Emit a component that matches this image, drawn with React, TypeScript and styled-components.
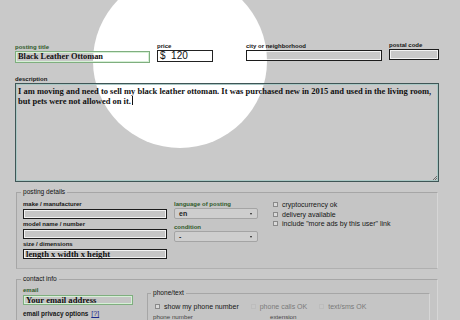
import React from 'react'
import styled, { createGlobalStyle } from 'styled-components'

// constants
const PAGE_BG = '#c9c9c9'
const BOX_BG = '#c5c5c5'
const LABEL_GREEN = '#2f5a2a'
const SANS = "'Liberation Sans', Arial, sans-serif"
const SERIF = "'Liberation Serif', 'Times New Roman', serif"

const GlobalStyle = createGlobalStyle`
  html, body {
    margin: 0;
    padding: 0;
    background: ${PAGE_BG};
  }
  body {
    font-family: ${SANS};
    color: #111;
  }
`

// styled
const Page = styled.div`
  position: relative;
  width: 460px;
  height: 320px;
  overflow: hidden;
  background: ${PAGE_BG};
`

const Spotlight = styled.div`
  position: absolute;
  left: 93px;
  top: -26px;
  width: 174px;
  height: 174px;
  border-radius: 50%;
  background: #fff;
`

const Form = styled.form`
  position: relative;
  padding: 43px 0 0 15px;
  width: 424px;
`

const TopRow = styled.div`
  display: flex;
  align-items: flex-start;
`

const Field = styled.div<{ $width: number; $gap?: number; $nudge?: number }>`
  display: flex;
  flex-direction: column;
  width: ${({ $width }) => $width}px;
  margin-left: ${({ $gap }) => $gap || 0}px;
  margin-top: ${({ $nudge }) => $nudge || 0}px;
`

const Label = styled.label<{ $green?: boolean }>`
  display: block;
  font-family: ${SANS};
  font-size: 6px;
  font-weight: bold;
  line-height: 8px;
  height: 8px;
  white-space: nowrap;
  color: ${({ $green }) => ($green ? LABEL_GREEN : '#151515')};
`

const TextBox = styled.div<{ $tone?: 'green' | 'dark' | 'price'; $height?: number }>`
  box-sizing: border-box;
  width: 100%;
  height: ${({ $height }) => $height || 11}px;
  padding: 0 2px;
  font-family: ${({ $tone }) => ($tone === 'price' ? SANS : SERIF)};
  font-size: ${({ $tone }) => ($tone === 'price' ? '10px' : '8.4px')};
  font-weight: ${({ $tone }) => ($tone === 'price' ? 'normal' : 'bold')};
  line-height: ${({ $height }) => ($height || 11) - 2}px;
  white-space: nowrap;
  overflow: hidden;
  color: #111;
  border: 1px solid
    ${({ $tone }) =>
      $tone === 'green' ? '#7fae7f' : $tone === 'price' ? '#222' : '#1c1c1c'};
  box-shadow: inset 0 0 0 1px
    ${({ $tone }) => ($tone === 'green' ? '#d6f0d6' : 'rgba(255,255,255,0.75)')};
`

const DescLabel = styled(Label)`
  margin-top: 12px;
`

const DescBox = styled.div`
  position: relative;
  box-sizing: border-box;
  width: 424px;
  height: 99px;
  padding: 2px 2px 0 2px;
  border: 1px solid #3f5656;
  box-shadow: inset 0 0 0 1px #a9c7c4;
  font-family: ${SERIF};
  font-size: 8.5px;
  font-weight: bold;
  line-height: 10px;
  white-space: nowrap;
  color: #111;
`

const Caret = styled.span`
  display: inline-block;
  width: 1px;
  height: 9px;
  margin-left: 1px;
  vertical-align: -1px;
  background: #111;
`

const Grip = styled.svg`
  position: absolute;
  right: 1px;
  bottom: 1px;
`

const Box = styled.fieldset<{ $top: number; $width: number; $left?: number; $bg?: boolean }>`
  box-sizing: border-box;
  width: ${({ $width }) => $width}px;
  margin: ${({ $top }) => $top}px 0 0 ${({ $left }) => $left || 1}px;
  padding: 0;
  min-width: 0;
  border: 1px solid #a6a6a6;
  border-right-color: #d6d6d6;
  border-bottom-color: #b0b0b0;
  background: ${({ $bg }) => ($bg ? BOX_BG : 'transparent')};
`

const Legend = styled.legend<{ $indent?: number }>`
  margin-left: ${({ $indent }) => $indent ?? 4}px;
  padding: 0 2px;
  font-family: ${SANS};
  font-size: 6.6px;
  line-height: 8px;
  color: #111;
`

const DetailsGrid = styled.div`
  display: grid;
  grid-template-columns: 144px 84px 1fr;
  column-gap: 7px;
  padding: 4px 0 8px 6px;
`

const Column = styled.div<{ $shift?: number }>`
  display: flex;
  flex-direction: column;
  margin-left: ${({ $shift }) => $shift || 0}px;
`

const SmallInput = styled(TextBox)`
  margin-top: 1px;
  margin-bottom: 1px;
  font-size: 8.6px;
  font-weight: 600;
`

const Select = styled.div`
  position: relative;
  box-sizing: border-box;
  width: 84px;
  height: 11px;
  margin-bottom: 4px;
  padding-left: 4px;
  border: 1px solid #a4a4a4;
  border-radius: 2px;
  background: #cecece;
  font-family: ${SANS};
  font-size: 7px;
  font-weight: bold;
  line-height: 9px;
  color: #222;
`

const SelectArrow = styled.span`
  position: absolute;
  right: 5px;
  top: 4px;
  width: 0;
  height: 0;
  border-left: 1.5px solid transparent;
  border-right: 1.5px solid transparent;
  border-top: 2px solid #222;
`

const CheckRow = styled.div<{ $muted?: boolean }>`
  display: flex;
  align-items: center;
  height: 9.5px;
  font-family: ${SANS};
  font-size: 7px;
  white-space: nowrap;
  color: ${({ $muted }) => ($muted ? '#7a7a7a' : '#161616')};
`

const Check = styled.span<{ $muted?: boolean }>`
  display: inline-block;
  box-sizing: border-box;
  width: 5px;
  height: 5px;
  margin-right: 4px;
  border: 1px solid ${({ $muted }) => ($muted ? '#bdbdbd' : '#8a8a8a')};
  background: ${({ $muted }) => ($muted ? '#c6c6c6' : '#dadada')};
`

const ContactGrid = styled.div`
  display: flex;
  align-items: flex-start;
  padding: 3px 0 0 6px;
`

const EmailColumn = styled.div`
  display: flex;
  flex-direction: column;
  width: 110px;
`

const PrivacyLabel = styled(Label)`
  margin-top: 4px;
  font-size: 6.4px;
`

const Help = styled.span`
  margin-left: 3px;
  color: #1d2a8c;
  text-decoration: underline;
  font-weight: normal;
  font-size: 7px;
`

const RadioRow = styled.div`
  display: flex;
  align-items: center;
  margin-top: 1px;
  font-family: ${SANS};
  font-size: 7px;
  font-weight: bold;
  white-space: nowrap;
`

const Radio = styled.span`
  display: inline-block;
  width: 4px;
  height: 4px;
  margin-right: 4px;
  border-radius: 50%;
  background: #222;
  box-shadow: 0 0 0 1px #eee;
`

const PhoneRow = styled.div`
  display: flex;
  gap: 12px;
  padding: 5px 0 0 7px;
`

const PhoneLabels = styled.div`
  display: flex;
  padding: 1px 0 0 5px;
  font-family: ${SANS};
  font-size: 6.2px;
  line-height: 8px;
  color: #444;
`

const PhoneLabel = styled.span<{ $width: number }>`
  width: ${({ $width }) => $width}px;
`

export default function App() {
  return (
    <Page>
      <GlobalStyle />
      <Spotlight />
      <Form>
        <TopRow>
          <Field $width={135}>
            <Label $green>posting title</Label>
            <TextBox $tone='green' $height={12}>Black Leather Ottoman</TextBox>
          </Field>
          <Field $width={56} $gap={7} $nudge={-1}>
            <Label>price</Label>
            <TextBox $tone='price' $height={12}>
              $&nbsp;&nbsp;120
            </TextBox>
          </Field>
          <Field $width={136} $gap={33} $nudge={-1}>
            <Label>city or neighborhood</Label>
            <TextBox />
          </Field>
          <Field $width={50} $gap={7} $nudge={-2}>
            <Label>postal code</Label>
            <TextBox />
          </Field>
        </TopRow>

        <DescLabel>description</DescLabel>
        <DescBox>
          I am moving and need to sell my black leather ottoman. It was purchased new in 2015
          and used in the living room,
          <br />
          but pets were not allowed on it.
          <Caret />
          <Grip width='5' height='5' viewBox='0 0 5 5'>
            <path d='M1 5 L5 1 M3 5 L5 3' stroke='#555' strokeWidth='0.8' />
          </Grip>
        </DescBox>

        <Box $top={6} $width={422} $bg>
          <Legend>posting details</Legend>
          <DetailsGrid>
            <Column>
              <Label>make / manufacturer</Label>
              <SmallInput $height={10} />
              <Label>model name / number</Label>
              <SmallInput $height={10} />
              <Label>size / dimensions</Label>
              <SmallInput $height={10}>length x width x height</SmallInput>
            </Column>
            <Column>
              <Label $green>language of posting</Label>
              <Select>
                en
                <SelectArrow />
              </Select>
              <Label $green>condition</Label>
              <Select>
                -
                <SelectArrow />
              </Select>
            </Column>
            <Column $shift={8}>
              <CheckRow>
                <Check />
                cryptocurrency ok
              </CheckRow>
              <CheckRow>
                <Check />
                delivery available
              </CheckRow>
              <CheckRow>
                <Check />
                include "more ads by this user" link
              </CheckRow>
            </Column>
          </DetailsGrid>
        </Box>

        <Box $top={6} $width={422} $bg>
          <Legend>contact info</Legend>
          <ContactGrid>
            <EmailColumn>
              <Label $green>email</Label>
              <SmallInput $tone='green' $height={10}>
                Your email address
              </SmallInput>
              <PrivacyLabel>
                email privacy options<Help>[?]</Help>
              </PrivacyLabel>
              <RadioRow>
                <Radio />
                C) mail relay (recommended)
              </RadioRow>
            </EmailColumn>
            <Box $top={3} $width={283} $left={14}>
              <Legend $indent={3}>phone/text</Legend>
              <PhoneRow>
                <CheckRow>
                  <Check />
                  show my phone number
                </CheckRow>
                <CheckRow $muted>
                  <Check $muted />
                  phone calls OK
                </CheckRow>
                <CheckRow $muted>
                  <Check $muted />
                  text/sms OK
                </CheckRow>
              </PhoneRow>
              <PhoneLabels>
                <PhoneLabel $width={117}>phone number</PhoneLabel>
                <PhoneLabel $width={60}>extension</PhoneLabel>
              </PhoneLabels>
            </Box>
          </ContactGrid>
        </Box>
      </Form>
    </Page>
  )
}
